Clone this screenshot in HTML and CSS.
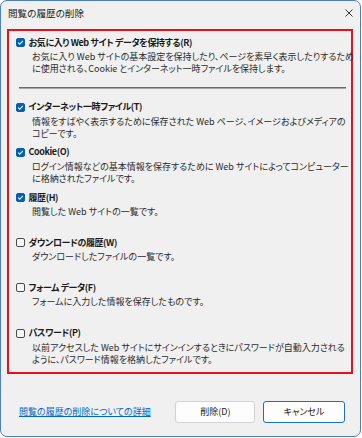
FILE: index.html
```html
<html lang="ja">
  <head>
    <meta charset="UTF-8" />
    <meta name="viewport" content="width=device-width, initial-scale=1.0" />
    <title>閲覧の履歴の削除</title>
    <link rel="stylesheet" href="styles.css">
  </head>
  <body>
    <div class="window">
      <div class="titlebar">
        <span class="title">閲覧の履歴の削除</span>
        <svg class="close" viewBox="0 0 8 8">
          <path d="M0.5 0.5L7.5 7.5M7.5 0.5L0.5 7.5" />
        </svg>
      </div>
      <div class="content">
        <div class="options">
          <div class="item first">
            <div class="label">
              <span class="box checked"><svg viewBox="0 0 9 9"><path d="M2.2 4.7L3.8 6.2L6.9 2.9" /></svg></span>
              お気に入り Web サイト データを保持する(R)
            </div>
            <div class="desc">お気に入り Web サイトの基本設定を保持したり、ページを素早く表示したりするため<br>に使用される、Cookie とインターネット一時ファイルを保持します。</div>
          </div>
          <div class="divider"></div>
          <div class="item">
            <div class="label">
              <span class="box checked"><svg viewBox="0 0 9 9"><path d="M2.2 4.7L3.8 6.2L6.9 2.9" /></svg></span>
              インターネット一時ファイル(T)
            </div>
            <div class="desc">情報をすばやく表示するために保存された Web ページ、イメージおよびメディアの<br>コピーです。</div>
          </div>
          <div class="item">
            <div class="label">
              <span class="box checked"><svg viewBox="0 0 9 9"><path d="M2.2 4.7L3.8 6.2L6.9 2.9" /></svg></span>
              Cookie(O)
            </div>
            <div class="desc">ログイン情報などの基本情報を保存するために Web サイトによってコンピューター<br>に格納されたファイルです。</div>
          </div>
          <div class="item">
            <div class="label">
              <span class="box checked"><svg viewBox="0 0 9 9"><path d="M2.2 4.7L3.8 6.2L6.9 2.9" /></svg></span>
              履歴(H)
            </div>
            <div class="desc">閲覧した Web サイトの一覧です。</div>
          </div>
          <div class="item">
            <div class="label">
              <span class="box"></span>
              ダウンロードの履歴(W)
            </div>
            <div class="desc">ダウンロードしたファイルの一覧です。</div>
          </div>
          <div class="item">
            <div class="label">
              <span class="box"></span>
              フォーム データ(F)
            </div>
            <div class="desc">フォームに入力した情報を保存したものです。</div>
          </div>
          <div class="item">
            <div class="label">
              <span class="box"></span>
              パスワード(P)
            </div>
            <div class="desc">以前アクセスした Web サイトにサインインするときにパスワードが自動入力される<br>ように、パスワード情報を格納したファイルです。</div>
          </div>
        </div>
      </div>
      <div class="footer">
        <a class="link" href="#">閲覧の履歴の削除についての詳細</a>
        <div class="buttons">
          <button class="btn">削除(D)</button>
          <button class="btn default">キャンセル</button>
        </div>
      </div>
    </div>
  </body>
</html>
```

FILE: styles.css
```css
body {
  margin: 0;
  background-color: white;
  font-family: "Noto Sans CJK JP", sans-serif;
  font-feature-settings: "palt";
  color: #1a1a1a;
}

.window {
  width: 361px;
  height: 437px;
  box-sizing: border-box;
  border: 1px solid #4a80c0;
  border-radius: 7px;
  background-color: #f0f0f0;
  display: flex;
  flex-direction: column;
  overflow: hidden;
}

.titlebar {
  height: 28px;
  box-sizing: border-box;
  display: flex;
  align-items: flex-start;
  justify-content: space-between;
  padding: 5px 7px 0 7px;
}

.titlebar .title {
  font-size: 9.6px;
  line-height: 14px;
  color: #1b1b1b;
}

.titlebar .close {
  width: 8px;
  height: 8px;
  margin-top: 2.5px;
  fill: none;
  stroke: #222;
  stroke-width: 0.9;
}

.content {
  padding: 0 7px 0 6px;
}

.options {
  height: 345px;
  box-sizing: border-box;
  border: 2px solid #e8101c;
  padding-top: 5.5px;
}

.item {
  height: 45.2px;
  padding-left: 7px;
}

.item.first {
  height: auto;
}

.label {
  display: flex;
  align-items: center;
  height: 12px;
  line-height: 12px;
  font-size: 9px;
  font-weight: bold;
  letter-spacing: -0.4px;
  white-space: nowrap;
}

.box {
  flex: none;
  width: 9px;
  height: 9px;
  margin-right: 3.5px;
  box-sizing: border-box;
  border: 1px solid #4a4a4a;
  border-radius: 2px;
  background-color: #f7f7f7;
}

.box.checked {
  border-color: #005fb8;
  background-color: #005fb8;
}

.box svg {
  display: block;
  width: 9px;
  height: 9px;
  margin: -1px;
  fill: none;
  stroke: white;
  stroke-width: 1.1;
}

.desc {
  margin-top: 2.5px;
  padding-left: 16px;
  font-size: 9px;
  line-height: 12px;
  color: #2b2b2b;
  white-space: nowrap;
}

.divider {
  height: 2px;
  box-sizing: border-box;
  margin: 11.5px 5px 12.7px 10px;
  border-top: 1px solid #6a6a6a;
  border-bottom: 1px solid #a8a8a8;
}

.footer {
  display: flex;
  align-items: center;
  padding: 26.7px 15px 0 18px;
}

.link {
  font-size: 9px;
  line-height: 12px;
  color: #0066cc;
  text-decoration: underline;
}

.buttons {
  margin-left: auto;
  display: flex;
  gap: 7.6px;
}

.btn {
  width: 80px;
  height: 22px;
  box-sizing: border-box;
  border: 1px solid #d3d3d3;
  border-radius: 3px;
  background-color: #fdfdfd;
  font-family: inherit;
  font-feature-settings: "palt";
  font-size: 9px;
  color: #1a1a1a;
  padding: 0;
}

.btn.default {
  width: 82px;
  border-color: #1a6fc4;
}
```
